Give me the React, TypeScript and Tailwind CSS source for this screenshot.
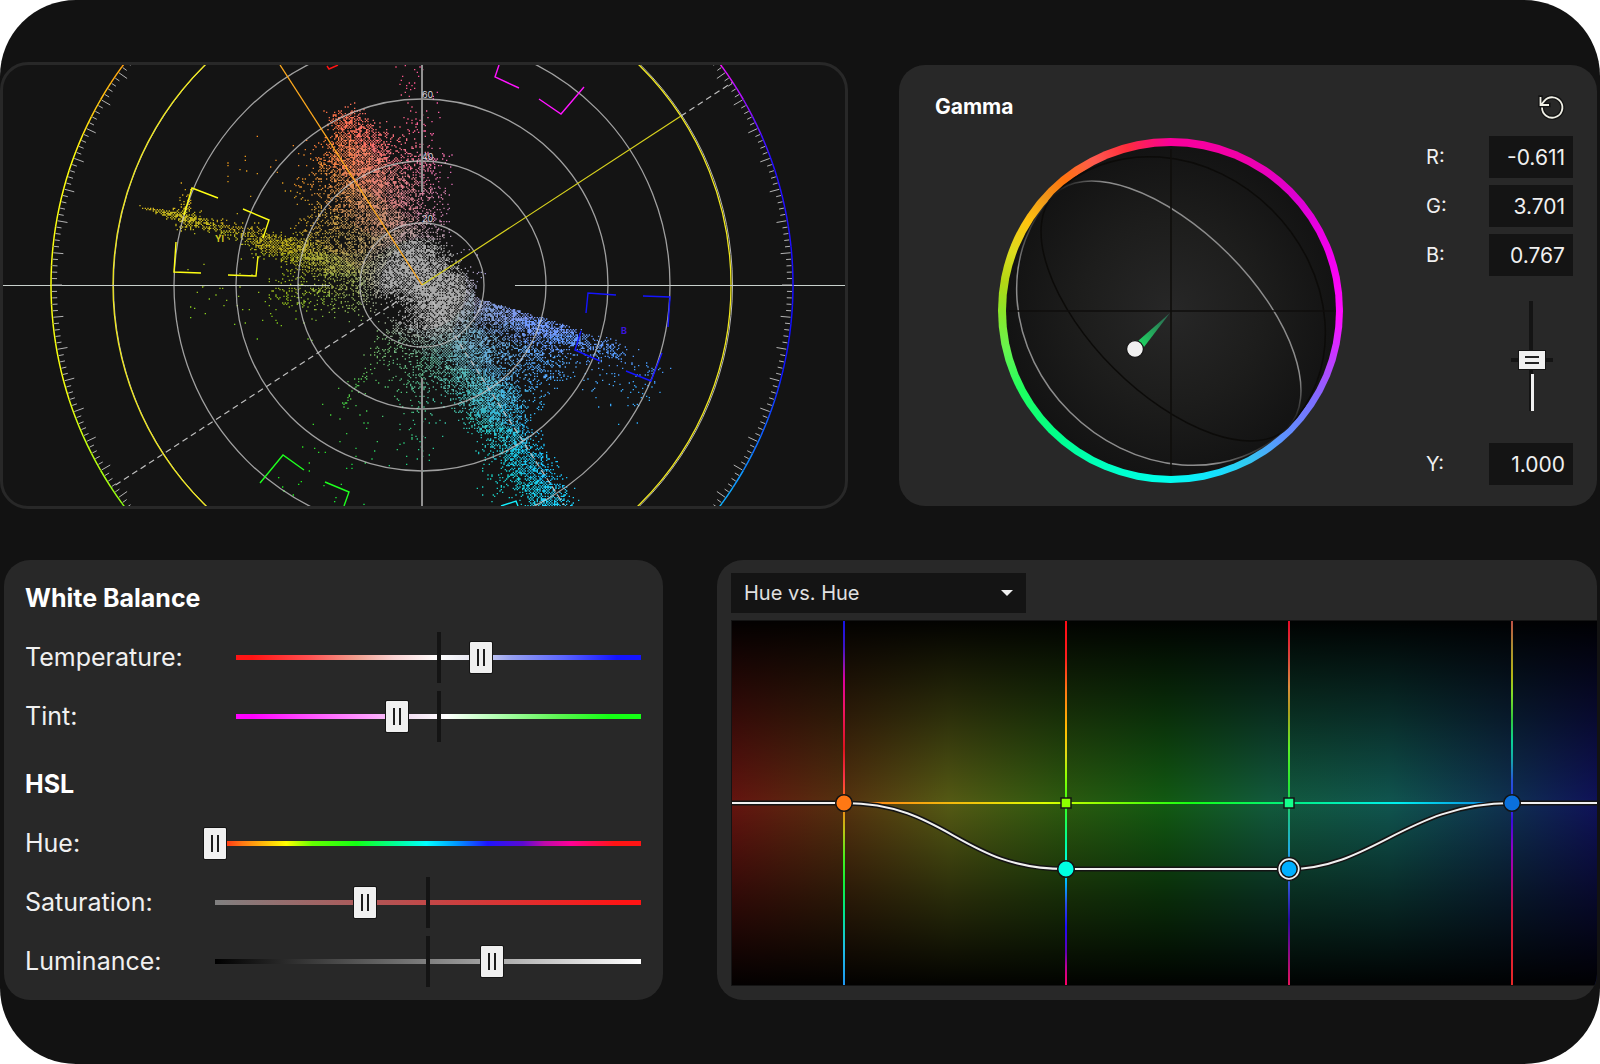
import { useState } from 'react';

const SCOPE_W = 842;
const SCOPE_H = 441;

// size of one trace sample
const CELL = 4 / 3;

// small seeded generator so the scope draws the same trace every time
function createRandom(seed: number) {
  let s = seed;
  return () => {
    s = (s + 0x6d2b79f5) | 0;
    let t = Math.imul(s ^ (s >>> 15), 1 | s);
    t = (t + Math.imul(t ^ (t >>> 7), 61 | t)) ^ t;
    return ((t ^ (t >>> 14)) >>> 0) / 4294967296;
  };
}

const clamp = (v: number, lo: number, hi: number) => Math.min(hi, Math.max(lo, v));

function traceColor(x: number, y: number) {
  const r = Math.hypot(x, y);
  const ramp = clamp((r - 38) / 30, 0.04, 1);
  const u = ((x + Math.max(y, 0) * 0.12) / 480) * ramp;
  const v = (-y / 460) * ramp;
  const luma = 0.67 - 0.07 * ramp;
  const q = (c: number) => clamp(Math.round((c * 255) / 14) * 14, 28, 252);
  const red = luma + 1.2 * v - 0.2 * Math.max(u, 0);
  const green = luma - (u > 0 ? 0.2 : 0.395) * u - 0.6 * v;
  const blue = luma + 1.75 * u + 0.35 * Math.min(v, 0);
  return `rgb(${q(red)},${q(green)},${q(blue)})`;
}

// x0, y0, x1, y1, start spread, end spread, count, bias towards the start
type Streak = [number, number, number, number, number, number, number, number];

const STREAKS: Streak[] = [
  [-22, -26, 34, 22, 30, 32, 3600, 1],
  [-22, -26, 34, 22, 44, 40, 900, 1],
  [-20, -25, -70, -140, 32, 36, 3400, 1],
  [-50, -100, -80, -172, 42, 16, 1000, 1],
  [-45, -70, -75, -150, 62, 46, 800, 1],
  [-6, -40, 2, -130, 30, 26, 600, 1.1],
  [0, -120, -12, -225, 18, 26, 100, 1],
  [-60, -60, -110, -120, 40, 44, 260, 1.4],
  [-15, -5, -165, -44, 20, 12, 1700, 1],
  [-45, -30, -125, -48, 42, 36, 800, 1],
  [-110, -35, -270, -76, 16, 2, 480, 1],
  [-225, -66, -252, -72, 12, 5, 150, 1],
  [-236, -95, -242, -55, 6, 6, 60, 1],
  [-40, 6, -150, 6, 22, 26, 420, 1.2],
  [-60, 15, -230, 15, 30, 50, 90, 1.2],
  [10, 20, 78, 130, 36, 30, 3800, 1],
  [60, 105, 140, 240, 26, 22, 2300, 1],
  [35, 14, 150, 52, 14, 8, 1700, 1],
  [35, 26, 140, 70, 30, 34, 1000, 1],
  [60, 45, 125, 110, 34, 44, 450, 1.2],
  [145, 52, 200, 68, 12, 9, 200, 1],
  [150, 62, 228, 112, 30, 40, 150, 1],
  [-12, 35, 10, 100, 38, 40, 460, 1.2],
  [-5, 80, -2, 180, 30, 20, 100, 1.2],
  [-20, 30, -75, 118, 18, 8, 110, 1],
  [-40, 120, -130, 220, 50, 50, 45, 1],
  [70, 130, 85, 215, 28, 26, 140, 1],
  [-150, -100, -190, -130, 50, 50, 16, 1],
];

function buildTrace() {
  const random = createRandom(41);
  // rounder than a gaussian: flat middle, soft edges
  const spread = () => (random() + random() + random() - 1.5) * 0.95;
  const used = new Set<number>();
  const groups = new Map<string, string[]>();
  for (const [x0, y0, x1, y1, s0, s1, count, bias] of STREAKS) {
    const len = Math.hypot(x1 - x0, y1 - y0);
    const nx = -(y1 - y0) / len;
    const ny = (x1 - x0) / len;
    for (let i = 0; i < count; i++) {
      const t = Math.pow(random(), bias) + spread() * 0.14;
      const g = spread() * (s0 + (s1 - s0) * clamp(t, 0, 1));
      const col = Math.round((x0 + (x1 - x0) * t + nx * g) / CELL);
      let row = Math.round((y0 + (y1 - y0) * t + ny * g) / CELL);
      if ((col + row) & 1 && random() < 0.75) row += 1;
      const x = col * CELL;
      const y = row * CELL;
      // the blue streak has a hard upper edge
      if (x > 55 && y < x * 0.3 - 4 && y > -8) continue;
      const key = (col + 500) * 1000 + row + 500;
      if (used.has(key)) continue;
      used.add(key);
      const color = traceColor(x, y);
      const list = groups.get(color) ?? [];
      list.push(`M${x.toFixed(2)} ${y.toFixed(2)}h1.33v1.33h-1.33z`);
      groups.set(color, list);
    }
  }
  return [...groups].map(([color, list]) => ({ color, d: list.join('') }));
}

const TRACE = buildTrace();

// angle (counter-clockwise from the right) -> hue
const HUE_STOPS = [
  [-13, 240],
  [20, 246],
  [37, 300],
  [103, 360],
  [135, 385],
  [160, 420],
  [195, 422],
  [241, 480],
  [284, 540],
  [320, 555],
  [332, 572],
  [347, 600],
];

function hueAt(angle: number) {
  const a = angle > 347 ? angle - 360 : angle;
  for (let i = 1; i < HUE_STOPS.length; i++) {
    const [a0, h0] = HUE_STOPS[i - 1];
    const [a1, h1] = HUE_STOPS[i];
    if (a <= a1) return (h0 + ((h1 - h0) * (a - a0)) / (a1 - a0)) % 360;
  }
  return 240;
}

const polar = (radius: number, angle: number) => {
  const rad = (angle * Math.PI) / 180;
  return `${(radius * Math.cos(rad)).toFixed(2)} ${(-radius * Math.sin(rad)).toFixed(2)}`;
};

const RIM = Array.from({ length: 120 }, (_, i) => ({
  color: `hsl(${hueAt(i * 3 + 1).toFixed(0)} 100% 53%)`,
  d: `M${polar(371, i * 3)}A371 371 0 0 0 ${polar(371, i * 3 + 3)}`,
}));

const TICKS = Array.from(
  { length: 360 },
  (_, a) => `M${polar(370, a)}L${polar(a % 5 === 0 ? 360 : 365, a)}`
).join('');

const TARGETS = [
  { color: '#ff1414', d: 'M-95-219l2 3 9-4' },
  { color: '#ff14ff', d: 'M77-220l-4 12 24 11M117-186l22 15 23-27' },
  { color: '#ffff14', d: 'M-204-87l-26-10-8 27M-179-76l26 11-6 18M-246-43l-2 30 27 1M-164-29l-2 20-28-1' },
  { color: '#1eff1e', d: 'M-162 198l23-28 21 15M-97 197l24 10-5 14' },
  { color: '#1414ff', d: 'M164 28l2-20 28 2M221 11l27 1-2 30M159 46l-6 19 25 11M204 86l25 10 11-28' },
  { color: '#14f0ff', d: 'M79 221l15-5 2 5' },
];

function Vectorscope() {
  return (
    <svg
      viewBox={`-419 -220 ${SCOPE_W} ${SCOPE_H}`}
      preserveAspectRatio="xMidYMid slice"
      className="block h-full w-full"
      role="img"
      aria-label="Vectorscope"
    >
      {TRACE.map(({ color, d }) => (
        <path key={color} d={d} fill={color} />
      ))}

      {/* graticule */}
      <g fill="none" stroke="#c8c8c8" strokeOpacity="0.78" strokeWidth="1.3">
        {[62, 124, 186, 248].map((r) => (
          <circle key={r} r={r} />
        ))}
      </g>
      <circle cx="1" r="309.5" fill="none" stroke="#b4b4b4" strokeWidth="1" />
      <circle r="309" fill="none" stroke="#f0e81e" strokeWidth="1.3" />
      <path d="M0-220V-93M0 93V221" stroke="#919191" strokeWidth="2" />
      <path d="M-419 .5H-92M93 .5H423" stroke="#c8d0cc" strokeWidth="1" />
      <path d="M259-169L311-203M0 0L-311 203M0 0L142 220" stroke="#bebebe" strokeWidth="1.2" strokeDasharray="6 4" />
      <path d="M0 0L259-169" stroke="#d8d21e" strokeWidth="1.2" />
      <path d="M0 0L-142-220" stroke="#ffaa1e" strokeWidth="1.3" />

      <path d={TICKS} stroke="#b4b4b4" strokeWidth="1" />
      {RIM.map(({ color, d }) => (
        <path key={d} d={d} fill="none" stroke={color} strokeWidth="1.5" />
      ))}
      {TARGETS.map(({ color, d }) => (
        <path key={color} d={d} fill="none" stroke={color} strokeWidth="1.4" />
      ))}

      <g fill="#d2d2dc" fontSize="9">
        <text x="0" y="-187">60</text>
        <text x="0" y="-125">40</text>
        <text x="0" y="-63">20</text>
      </g>
      <text x="-207" y="-43" fontSize="9" fontWeight="700" fill="#d2c81e">Yl</text>
      <text x="199" y="49" fontSize="9" fontWeight="700" fill="#3c14dc">B</text>
    </svg>
  );
}

function ColorWheel() {
  return (
    <div className="grid size-[345px] place-items-center rounded-full bg-[conic-gradient(#f9009a_0deg,#f000a8_25deg,#dc00d2_48deg,#f500f0_72deg,#ff0cff_92deg,#b446ff_110deg,#7d6eff_122deg,#5a96ff_140deg,#32c8f0_153deg,#14e1ff_165deg,#00ffeb_182deg,#00ffc8_200deg,#00ff8c_222deg,#1eff5f_242deg,#64f550_256deg,#8ce628_270deg,#b4d714_280deg,#dcdc1e_290deg,#ffc30f_302deg,#f09619_312deg,#ff730f_321deg,#ff5a50_333deg,#ff2d3c_345deg,#f9009a_360deg)]">
      <svg viewBox="-165 -165 330 330" className="size-[330px]" role="img" aria-label="Gamma color wheel">
        <defs>
          <radialGradient id="wheel-face">
            <stop offset="0" stopColor="#272727" />
            <stop offset="0.55" stopColor="#1d1d1c" />
            <stop offset="1" stopColor="#131313" />
          </radialGradient>
          <linearGradient id="wheel-beam" x1="1" y1="0" x2="0" y2="1">
            <stop offset="0" stopColor="#2d5f50" />
            <stop offset="1" stopColor="#1edc64" />
          </linearGradient>
          <linearGradient id="wheel-orbit">
            <stop offset="0" stopColor="#8c8c8c" stopOpacity="0.1" />
            <stop offset="0.08" stopColor="#8c8c8c" />
            <stop offset="0.92" stopColor="#8c8c8c" />
            <stop offset="1" stopColor="#8c8c8c" stopOpacity="0.1" />
          </linearGradient>
        </defs>
        <circle r="165" fill="url(#wheel-face)" />
        {/* each orbit is wide on one side of the diagonal and narrow on the other */}
        <g transform="rotate(45)" fill="none" strokeWidth="1.5">
          <path d="M-165 0A165 143 0 0 1 165 0A165 81 0 0 1-165 0" stroke="#0c0b09" />
          <path d="M-165 0A165 81 0 0 1 165 0A165 143 0 0 1-165 0" stroke="url(#wheel-orbit)" />
        </g>
        <path d="M0-162V164M-162 0H163" stroke="#0f0e0c" strokeWidth="1.6" />
        <path d="M-1 2L-33 30L-27 36Z" fill="url(#wheel-beam)" />
        <circle cx="-36" cy="38" r="8.4" fill="#f0f0f0" stroke="#111" strokeWidth="1.2" />
      </svg>
    </div>
  );
}

function ValueField({ label, value }: { label: string; value: string }) {
  const id = `gamma-${label.toLowerCase()}`;
  return (
    <div className="flex items-center justify-between">
      <label htmlFor={id}>{label}:</label>
      <input
        id={id}
        type="text"
        defaultValue={value}
        className="h-[42px] w-[84px] bg-[#141414] pr-2 text-right text-[21px] outline-none"
      />
    </div>
  );
}

function GammaPanel() {
  return (
    <section className="my-[3px] flex rounded-[26px] bg-[#282828] pr-6 pl-9 text-xl text-[#f0f0f0]">
      <div className="flex flex-1 flex-col pt-7 pr-5">
        <h2 className="text-[21px] leading-7 font-bold text-white">Gamma</h2>
        <div className="mt-[17px] flex justify-center">
          <ColorWheel />
        </div>
      </div>
      <div className="flex w-[147px] flex-col pt-7">
        <button type="button" aria-label="Reset gamma" className="mr-2 flex h-7 items-center justify-center self-end">
          <svg viewBox="0 0 28 28" className="size-7" fill="none">
            <g stroke="#141414" strokeWidth="4.5" strokeLinecap="square">
              <path d="M3.5 4.5v7.5h8M5 14.5a10.2 10.2 0 1 0 2.4-6.6L4 12" />
            </g>
            <path d="M3.5 4v8h8.5M5 14.5a10.2 10.2 0 1 0 2.4-6.6L4 12" stroke="#f0f0e6" strokeWidth="1.8" />
          </svg>
        </button>
        <div className="mt-[15px] flex flex-col gap-[7px]">
          <ValueField label="R" value="-0.611" />
          <ValueField label="G" value="3.701" />
          <ValueField label="B" value="0.767" />
        </div>
        <input
          type="range"
          aria-label="Gamma level"
          min={0}
          max={1000}
          defaultValue={456}
          className="mt-[25px] mr-5 mb-8 h-[110px] w-[42px] appearance-none self-end bg-[linear-gradient(#f0f0f0,#f0f0f0),linear-gradient(#141414,#141414),linear-gradient(#141414,#141414)] bg-[size:3px_37px,4px_110px,42px_4px] bg-[position:20px_73px,18px_0px,0px_57px] bg-no-repeat [direction:rtl] [writing-mode:vertical-lr] [&::-webkit-slider-thumb]:h-5 [&::-webkit-slider-thumb]:w-7 [&::-webkit-slider-thumb]:appearance-none [&::-webkit-slider-thumb]:border [&::-webkit-slider-thumb]:border-[#141414] [&::-webkit-slider-thumb]:bg-[linear-gradient(#222,#222),linear-gradient(#222,#222),linear-gradient(#f0f0f0,#f0f0f0)] [&::-webkit-slider-thumb]:bg-[size:14px_2px,14px_2px,100%_100%] [&::-webkit-slider-thumb]:bg-[position:6px_5px,6px_11px,0px_0px] [&::-webkit-slider-thumb]:bg-no-repeat"
        />
        <ValueField label="Y" value="1.000" />
      </div>
    </section>
  );
}

const RANGE_BASE =
  'h-[51px] min-w-0 flex-1 appearance-none bg-no-repeat bg-center [&::-webkit-slider-thumb]:h-[33px] [&::-webkit-slider-thumb]:w-6 [&::-webkit-slider-thumb]:appearance-none [&::-webkit-slider-thumb]:rounded-[2px] [&::-webkit-slider-thumb]:border-[1px] [&::-webkit-slider-thumb]:border-[#141414] [&::-webkit-slider-thumb]:bg-[linear-gradient(#1c1c1c,#1c1c1c),linear-gradient(#1c1c1c,#1c1c1c),linear-gradient(#f0f0f0,#f0f0f0)] [&::-webkit-slider-thumb]:bg-[size:2px_17px,2px_17px,100%_100%] [&::-webkit-slider-thumb]:bg-[position:7px_7px,13px_7px,0px_0px] [&::-webkit-slider-thumb]:bg-no-repeat';

const WITH_CENTER = 'bg-[size:4px_51px,100%_5px]';

const BALANCE_SLIDERS = [
  {
    name: 'Temperature',
    value: 612,
    labelWidth: 'w-[211px]',
    track: `${WITH_CENTER} bg-[image:linear-gradient(#141414,#141414),linear-gradient(to_right,#ff1414_4%,#ff5050_18%,#f0a090_30%,#fad2d2_39%,#fff_50%,#e6e6f0_58%,#96a0f0_68%,#5a64ff_81%,#1414ff_94%)]`,
  },
  {
    name: 'Tint',
    value: 390,
    labelWidth: 'w-[211px]',
    track: `${WITH_CENTER} bg-[image:linear-gradient(#141414,#141414),linear-gradient(to_right,#ff00ff_4%,#ff46ff_16%,#ffa0ff_33%,#f0dcf0_42%,#fff_52%,#b4ffb4_64%,#5af550_80%,#14ff14_92%)]`,
  },
];

const HSL_SLIDERS = [
  {
    name: 'Hue',
    value: 0,
    labelWidth: 'w-[178px]',
    track:
      'bg-[size:100%_5px] bg-[image:linear-gradient(to_right,#ff1414_3%,#ff7814_9%,#ffff00_19%,#64ff00_25%,#14ff14_35%,#00ff96_44%,#00ffff_51%,#0096ff_58%,#1e14ff_65%,#5a0ad2_73%,#be0aaa_78%,#ff0096_84%,#ff1414_94%)]',
  },
  {
    name: 'Saturation',
    value: 343,
    labelWidth: 'w-[190px]',
    track: `${WITH_CENTER} bg-[image:linear-gradient(#141414,#141414),linear-gradient(to_right,#808080,#ff1414_96%)]`,
  },
  {
    name: 'Luminance',
    value: 658,
    labelWidth: 'w-[190px]',
    track: `${WITH_CENTER} bg-[image:linear-gradient(#141414,#141414),linear-gradient(to_right,#000,#fff)]`,
  },
];

type Slider = (typeof HSL_SLIDERS)[number];

function SliderRow({ name, value, labelWidth, track }: Slider) {
  const id = name.toLowerCase();
  return (
    <div className="flex h-[59px] items-center">
      <label htmlFor={id} className={`shrink-0 ${labelWidth}`}>
        {name}:
      </label>
      <input id={id} type="range" min={0} max={1000} defaultValue={value} className={`${RANGE_BASE} ${track}`} />
    </div>
  );
}

function BalancePanel() {
  return (
    <section className="rounded-[26px] bg-[#282828] pt-2 pr-[22px] pb-[9px] pl-[21px] text-[25px] text-[#f0f0f0]">
      <h2 className="leading-[60px] font-bold text-white">White Balance</h2>
      {BALANCE_SLIDERS.map((slider) => (
        <SliderRow key={slider.name} {...slider} />
      ))}
      <h2 className="mt-2 leading-[60px] font-bold text-white">HSL</h2>
      {HSL_SLIDERS.map((slider) => (
        <SliderRow key={slider.name} {...slider} />
      ))}
    </section>
  );
}

// color stops along each vertical guide, top to bottom
const GUIDES = [
  {
    x: 112,
    stops: [
      [0, '#1414e6'], [0.07, '#3c14c8'], [0.12, '#8c14b4'], [0.16, '#dc00a0'], [0.24, '#f01464'], [0.35, '#dc1420'],
      [0.43, '#fa3246'], [0.5, '#ff7814'], [0.58, '#b4c814'], [0.65, '#46f01e'], [0.72, '#14f03c'], [0.8, '#00e68c'],
      [0.9, '#1ebee6'], [1, '#1e96f0'],
    ],
  },
  {
    x: 334,
    stops: [
      [0, '#ff0a14'], [0.1, '#ff1e1e'], [0.19, '#ff7814'], [0.3, '#ffbe00'], [0.37, '#dcdc14'], [0.42, '#96ff00'],
      [0.5, '#3cff14'], [0.6, '#00ff96'], [0.67, '#00ffe6'], [0.72, '#00b4ff'], [0.78, '#2846e6'], [0.84, '#1e0aff'],
      [0.91, '#6400b4'], [0.95, '#be0096'], [1, '#ff0064'],
    ],
  },
  {
    x: 557,
    stops: [
      [0, '#e60a28'], [0.1, '#dc463c'], [0.18, '#dc8c3c'], [0.25, '#aaa01e'], [0.35, '#5af028'], [0.45, '#28e632'],
      [0.55, '#1ebe96'], [0.63, '#1eaae6'], [0.73, '#3250d2'], [0.82, '#280aa0'], [0.9, '#820a8c'], [1, '#e6145a'],
    ],
  },
  {
    x: 780,
    stops: [
      [0, '#be5046'], [0.07, '#aa8c32'], [0.15, '#b4b414'], [0.2, '#82dc28'], [0.27, '#32c83c'], [0.33, '#0ad296'],
      [0.38, '#14aaaa'], [0.44, '#2850dc'], [0.5, '#283ce6'], [0.55, '#3c0adc'], [0.62, '#8c00c8'], [0.7, '#b40096'],
      [0.8, '#dc143c'], [1, '#e62828'],
    ],
  },
] as { x: number; stops: [number, string][] }[];

const CURVE = 'M0 182H112C216 182 228 248 334 248H557C640 248 676 182 780 182H865';

function CurveGraph() {
  return (
    <div className="h-[366px] border border-r-0 border-[#141414] bg-[linear-gradient(to_bottom,rgba(0,0,0,0.97),rgba(0,0,0,0.5)_25%,rgba(0,0,0,0)_50%,rgba(0,0,0,0.5)_75%,rgba(0,0,0,0.97)),linear-gradient(to_right,#64140f_0%,#55320f_13%,#555a14_25%,#2d5a0f_38%,#125a12_50%,#125a3c_62%,#10554f_76%,#0f3250_89%,#0f1259_100%)]">
      <svg
        viewBox="0 0 865 364"
        preserveAspectRatio="xMidYMid slice"
        className="block h-full w-full"
        role="img"
        aria-label="Hue vs. Hue curve"
      >
        <defs>
          {GUIDES.map(({ x, stops }) => (
            <linearGradient key={x} id={`guide-${x}`} x1="0" y1="0" x2="0" y2="1">
              {stops.map(([offset, color]) => (
                <stop key={offset} offset={offset} stopColor={color} />
              ))}
            </linearGradient>
          ))}
          <linearGradient id="baseline">
            <stop offset="0" stopColor="#ff7814" />
            <stop offset="0.2" stopColor="#f0c80a" />
            <stop offset="0.3" stopColor="#dcff00" />
            <stop offset="0.4" stopColor="#82ff00" />
            <stop offset="0.52" stopColor="#14ff14" />
            <stop offset="0.67" stopColor="#00f082" />
            <stop offset="0.83" stopColor="#00f0f0" />
            <stop offset="1" stopColor="#0a70dc" />
          </linearGradient>
        </defs>
        {GUIDES.map(({ x }) => (
          <rect key={x} x={x - 1} y="0" width="2" height="364" fill={`url(#guide-${x})`} />
        ))}
        <rect x="112" y="181" width="668" height="2" fill="url(#baseline)" />
        <path d={CURVE} fill="none" stroke="#141414" strokeWidth="5" />
        <path d={CURVE} fill="none" stroke="#f0f0f0" strokeWidth="2" />
        <g stroke="#141414" strokeWidth="1.5">
          <rect x="329" y="177" width="10" height="10" fill="#8cff00" />
          <rect x="552" y="177" width="10" height="10" fill="#14ff8c" />
          <circle cx="112" cy="182" r="8.3" fill="#ff7814" />
          <circle cx="334" cy="248" r="8.3" fill="#00ffe1" />
          <circle cx="557" cy="248" r="11.4" fill="#f0f0f0" />
          <circle cx="557" cy="248" r="8.2" fill="#00afff" />
          <circle cx="780" cy="182" r="8.3" fill="#0a70dc" />
        </g>
      </svg>
    </div>
  );
}

function CurvePanel() {
  const [mode, setMode] = useState('Hue vs. Hue');

  return (
    <section className="overflow-hidden rounded-[26px] bg-[#282828] pt-[13px] pb-[14px] pl-[14px]">
      <div className="relative w-[295px] max-w-full">
        <select
          value={mode}
          onChange={(e) => setMode(e.target.value)}
          aria-label="Curve type"
          className="block h-10 w-full appearance-none bg-[#141414] px-[13px] text-xl text-[#e0e0e0] outline-none"
        >
          <option>Hue vs. Hue</option>
          <option>Hue vs. Saturation</option>
          <option>Hue vs. Luminance</option>
        </select>
        <svg viewBox="0 0 12 6" className="pointer-events-none absolute top-[17px] right-[13px] h-1.5 w-3">
          <path d="M0 0h12L6 6z" fill="#f0f0f0" />
        </svg>
      </div>
      <div className="mt-[7px]">
        <CurveGraph />
      </div>
    </section>
  );
}

export default function App() {
  return (
    <main className="flex flex-col gap-[51px] rounded-[76px] bg-[#121212] pt-[62px] pb-16 font-[Inter,sans-serif]">
      <div className="grid grid-cols-[minmax(0,848fr)_minmax(0,698fr)] gap-[51px] pr-[3px]">
        <section className="h-[447px] overflow-hidden rounded-[28px] border-[3px] border-[#282828] bg-[#141414]">
          <Vectorscope />
        </section>
        <GammaPanel />
      </div>
      <div className="grid grid-cols-[minmax(0,659fr)_minmax(0,880fr)] gap-[54px] pr-[3px] pl-1">
        <BalancePanel />
        <CurvePanel />
      </div>
    </main>
  );
}
